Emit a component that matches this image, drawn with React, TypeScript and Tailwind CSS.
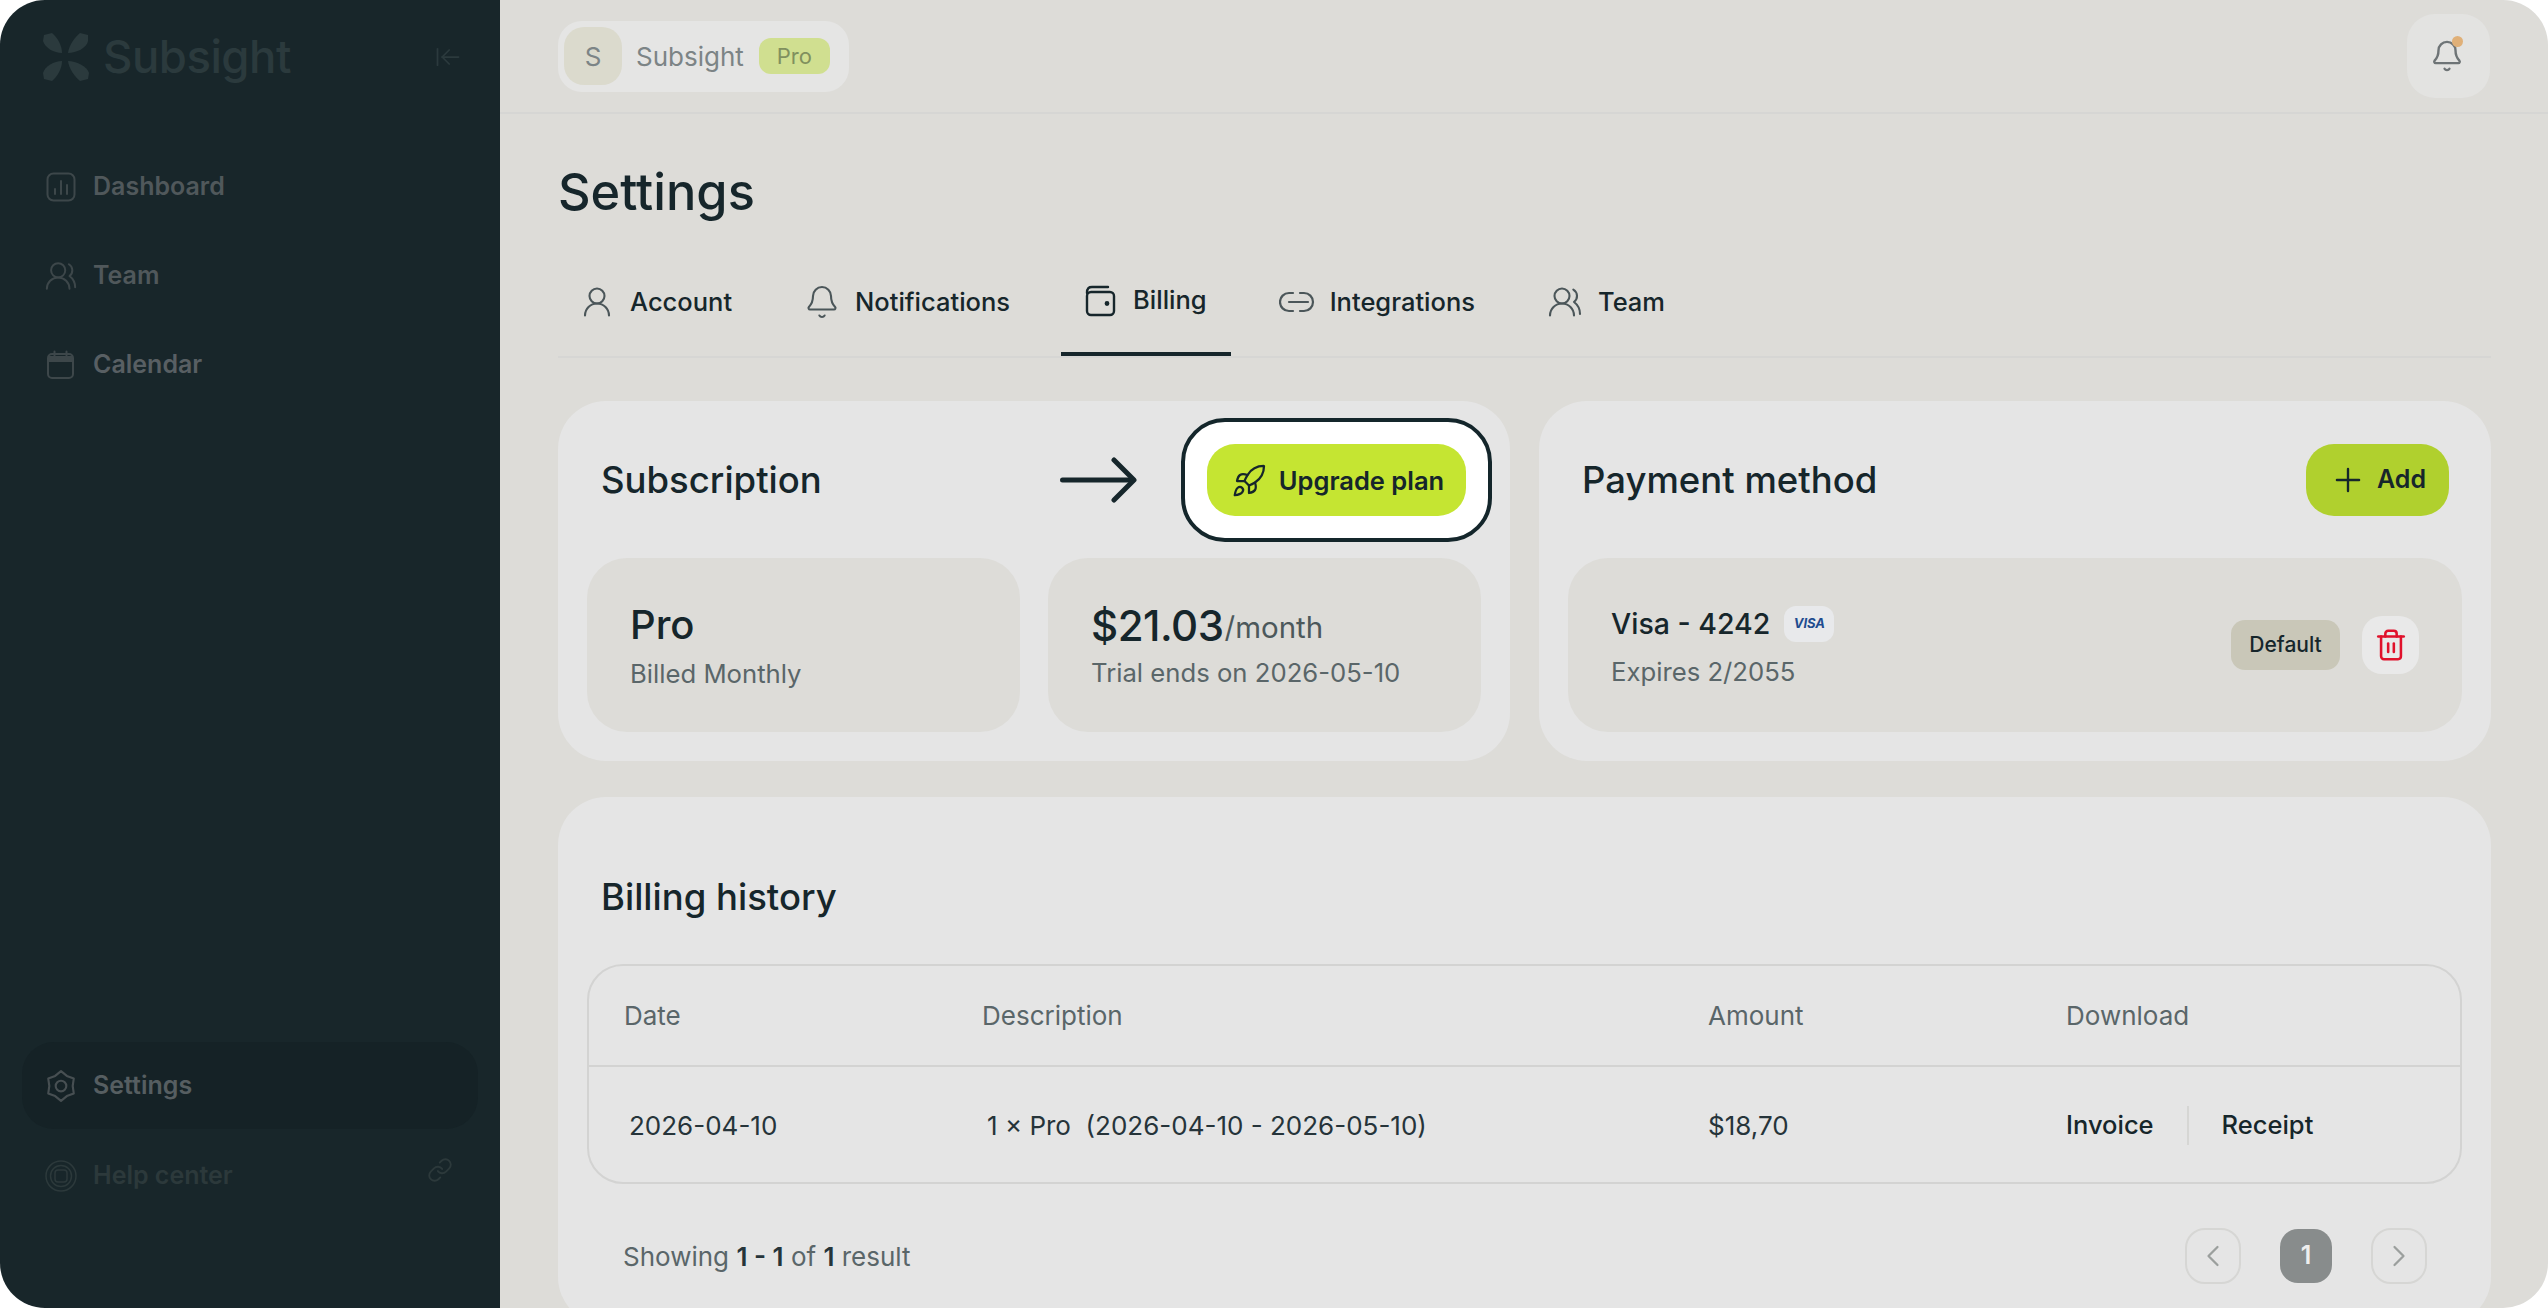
import type { ComponentType } from "react";
import {
  ArrowLeftToLine,
  Bell,
  ChevronLeft,
  ChevronRight,
  Link,
  Plus,
  Rocket,
  Trash2,
  UserRound,
  UsersRound,
} from "lucide-react";

const heading = "font-['Inter',sans-serif]";

function Logo() {
  return (
    <svg width="46" height="48" viewBox="0 0 46 48" fill="#2b3a3d">
      <path d="M1 2 L9 0 C14 4 19 12 19 20 C11 20 2 15 0 8 Z" />
      <path d="M45 2 L37 0 C32 4 26 12 25 20 C33 20 44 15 45 8 Z" />
      <path d="M1 46 L9 48 C14 44 19 36 19 28 C11 28 2 33 0 40 Z" />
      <path d="M45 46 L37 48 C32 44 26 36 25 28 C33 28 44 33 46 40 Z" />
    </svg>
  );
}

function DashboardIcon() {
  return (
    <svg width="30" height="30" viewBox="0 0 30 30" fill="none" stroke="currentColor" strokeWidth="2" strokeLinecap="round">
      <rect x="1.5" y="1.5" width="27" height="27" rx="6" />
      <path d="M9 17v5M15 9v13M21 13v9" />
    </svg>
  );
}

function CalendarIcon() {
  return (
    <svg width="30" height="30" viewBox="0 0 30 30" fill="none" stroke="currentColor" strokeWidth="2" strokeLinecap="round">
      <rect x="2" y="4" width="25" height="24" rx="4" />
      <path d="M3 6h23v6H3z" fill="currentColor" stroke="none" />
      <path d="M8.5 1.5v4M20.5 1.5v4" />
    </svg>
  );
}

function GearIcon() {
  return (
    <svg width="32" height="34" viewBox="2 0 28 32" fill="none" stroke="currentColor" strokeWidth="2" strokeLinejoin="round">
      <path d="M16 2 L21.5 6.5 L28 9 L27 16 L28 23 L21.5 25.5 L16 30 L10.5 25.5 L4 23 L5 16 L4 9 L10.5 6.5 Z" />
      <circle cx="16" cy="16" r="5" />
    </svg>
  );
}

function HelpIcon() {
  return (
    <svg width="32" height="32" viewBox="0 0 32 32" fill="none" stroke="currentColor" strokeWidth="1.5">
      <circle cx="16" cy="16" r="15" />
      <circle cx="16" cy="16" r="10.5" />
      <rect x="10" y="10" width="12" height="12" rx="3" />
    </svg>
  );
}

function WalletIcon({ className }: { className?: string }) {
  return (
    <svg className={className} width="36" height="36" viewBox="0 0 36 36" fill="none" stroke="currentColor" strokeWidth="2.4" strokeLinecap="round">
      <path d="M5 11 C5 6 7 5 10 5 H26" />
      <rect x="5" y="10" width="27" height="23" rx="4" />
      <circle cx="25" cy="21.5" r="1.2" fill="currentColor" />
    </svg>
  );
}

function LinkIcon({ className }: { className?: string }) {
  return (
    <svg className={className} width="36" height="36" viewBox="0 0 36 36" fill="none" stroke="currentColor" strokeWidth="2.2" strokeLinecap="round">
      <path d="M14 9 H10 a9 9 0 0 0 0 18 H14" />
      <path d="M21 9 H25 a9 9 0 0 1 0 18 H21" />
      <path d="M10 18 H29" />
    </svg>
  );
}

function ArrowIcon() {
  return (
    <svg width="77" height="46" viewBox="0 0 77 46" fill="none" stroke="#16262b" strokeWidth="5" strokeLinecap="round" strokeLinejoin="round">
      <path d="M2.5 23H73" />
      <path d="M54 3 L74 23 L54 43" />
    </svg>
  );
}

function Sidebar() {
  return (
    <aside className="w-[500px] shrink-0 bg-[#18262a] flex flex-col px-[22px] pb-[89px]">
      <div className="h-[143px] pt-[33px] pl-[21px] flex items-start">
        <Logo />
        <span className={`${heading} ml-[14px] text-[45.5px] leading-[48px] font-medium text-[#2b3a3d] tracking-[-0.5px]`}>Subsight</span>
        <ArrowLeftToLine className="ml-auto mr-[16px] mt-[10px] text-[#2b3a3d]" size={28} strokeWidth={1.5} />
      </div>
      <nav className="flex flex-col gap-[2px] text-[25px] font-semibold text-[#50585b]">
        <div className="h-[87px] px-[24px] flex items-center gap-[17px]">
          <span className="text-[#3d474a]"><DashboardIcon /></span>
          <span>Dashboard</span>
        </div>
        <div className="h-[87px] px-[22px] flex items-center gap-[15px]">
          <UsersRound className="text-[#3d474a]" size={34} strokeWidth={1.4} />
          <span>Team</span>
        </div>
        <div className="h-[87px] px-[24px] flex items-center gap-[17px]">
          <span className="text-[#3d474a]"><CalendarIcon /></span>
          <span className="text-[#585f63]">Calendar</span>
        </div>
      </nav>
      <div className="mt-auto flex flex-col gap-[3px] text-[25px] font-semibold">
        <div className="h-[87px] px-[23px] flex items-center gap-[16px] rounded-[32px] bg-[#152226] text-[#565e61]">
          <span className="text-[#474f52]"><GearIcon /></span>
          <span>Settings</span>
        </div>
        <div className="h-[87px] pl-[23px] pr-[25px] flex items-center gap-[16px] text-[#2c393b]">
          <HelpIcon />
          <span>Help center</span>
          <Link className="ml-auto -translate-y-[6px]" size={26} strokeWidth={1.7} />
        </div>
      </div>
    </aside>
  );
}

function Tab({
  icon: Icon,
  size = 36,
  label,
  active,
}: {
  icon: ComponentType<{ className?: string; size?: number; strokeWidth?: number }>;
  size?: number;
  label: string;
  active?: boolean;
}) {
  return (
    <div
      className={`h-full -mb-[2px] pl-[21px] pr-[24px] flex items-center gap-[15px] text-[25.5px] font-medium text-[#16262b] border-b-[4px] ${
        active ? "border-[#16262b] pb-[4px]" : "border-transparent"
      }`}
    >
      <Icon className={active ? "text-[#16262b]" : "text-[#4b5659]"} size={size} strokeWidth={1.4} />
      <span>{label}</span>
    </div>
  );
}

function Header() {
  return (
    <header className="h-[114px] shrink-0 border-b-2 border-[#d6d6d4] pl-[58px] pr-[58px] flex items-center justify-between">
      <div className="h-[71px] w-[291px] rounded-[24px] bg-[#e5e5e4] flex items-center pl-[6px]">
        <div className="w-[58px] h-[58px] rounded-[20px] bg-[#dbdacd] flex items-center justify-center text-[26px] text-[#7c8486]">S</div>
        <span className="ml-[14px] text-[26px] text-[#7c8486]">Subsight</span>
        <span className="ml-[15px] h-[36px] w-[71px] rounded-[12px] bg-[#d0df90] flex items-center justify-center text-[22px] text-[#80905e]">Pro</span>
      </div>
      <div className="relative w-[83px] h-[84px] rounded-[28px] bg-[#e3e3e1] flex items-center justify-center">
        <Bell className="text-[#6e7476] -translate-x-[2px]" size={34} strokeWidth={1.7} />
        <span className="absolute top-[22px] right-[27px] w-[11px] h-[11px] rounded-full bg-[#e0b078]" />
      </div>
    </header>
  );
}

function Subscription() {
  return (
    <section className="rounded-[48px] bg-[#e5e5e5] p-[29px]">
      <div className="pt-[14px] pl-[14px] pr-[15px] flex items-center justify-between">
        <h2 className={`${heading} text-[36.5px] font-medium text-[#16262b]`}>Subscription</h2>
        <div className="flex items-center gap-[70px]">
          <ArrowIcon />
          <div className="relative">
            <div className="absolute -inset-[26px] rounded-[44px] border-4 border-[#14262b] bg-white" />
            <button className="relative w-[259px] h-[72px] rounded-[28px] bg-[#c5e532] flex items-center justify-center gap-[12px] pt-[2px] pl-[2px] text-[25.5px] font-semibold text-[#16262b]">
              <Rocket size={36} strokeWidth={1.5} />
              <span>Upgrade plan</span>
            </button>
          </div>
        </div>
      </div>
      <div className="mt-[42px] grid grid-cols-2 gap-[28px]">
        <div className="h-[174px] rounded-[40px] bg-[#dddcd8] px-[43px] flex flex-col justify-center pt-[3px]">
          <div className={`${heading} text-[40px] leading-[48px] font-medium text-[#16262b]`}>Pro</div>
          <div className="mt-[7px] text-[25.7px] leading-[36px] text-[#5a6669]">Billed Monthly</div>
        </div>
        <div className="h-[174px] rounded-[40px] bg-[#dddcd8] px-[43px] flex flex-col justify-center pt-[4px]">
          <div className="leading-[44px] text-[#16262b]">
            <span className={`${heading} text-[42px] font-medium tracking-[-0.5px]`}>$21.03</span>
            <span className="inline-block ml-[1px] -translate-y-[3px] text-[29.5px] text-[#4c585b]">/month</span>
          </div>
          <div className="-mt-[2px] text-[25.7px] leading-[36px] text-[#5a6669]">Trial ends on 2026-05-10</div>
        </div>
      </div>
    </section>
  );
}

function PaymentMethod() {
  return (
    <section className="rounded-[48px] bg-[#e5e5e5] p-[29px]">
      <div className="pt-[14px] pl-[14px] pr-[13px] flex items-center justify-between">
        <h2 className={`${heading} text-[36.5px] font-medium text-[#16262b]`}>Payment method</h2>
        <button className="w-[143px] h-[72px] rounded-[28px] bg-[#b0d02e] flex items-center justify-center gap-[10px] text-[25px] font-semibold text-[#16262b]">
          <Plus size={38} strokeWidth={1.5} />
          <span>Add</span>
        </button>
      </div>
      <div className="mt-[42px] h-[174px] rounded-[40px] bg-[#dddcd8] pl-[43px] pr-[43px] flex items-center justify-between">
        <div className="pt-[6px]">
          <div className="flex items-center gap-[14px]">
            <span className="text-[28.5px] leading-[36px] font-medium text-[#16262b]">Visa - 4242</span>
            <span className="w-[50px] h-[36px] rounded-[12px] bg-[#e8e9eb] flex items-center justify-center text-[13px] font-bold italic text-[#1f4c8f]">VISA</span>
          </div>
          <div className="mt-[12px] text-[25.7px] leading-[36px] text-[#5a6669]">Expires 2/2055</div>
        </div>
        <div className="flex items-center gap-[22px]">
          <span className="w-[109px] h-[50px] rounded-[14px] bg-[#c9c7b8] flex items-center justify-center text-[21px] font-medium text-[#16262b]">Default</span>
          <button className="w-[57px] h-[58px] rounded-[20px] bg-[#e9e9e9] flex items-center justify-center text-[#e0112b]">
            <Trash2 size={34} strokeWidth={1.8} />
          </button>
        </div>
      </div>
    </section>
  );
}

function BillingHistory() {
  return (
    <section className="mt-[36px] rounded-[48px] bg-[#e5e5e5] px-[29px] pt-[77px] pb-[41px]">
      <h2 className={`${heading} pl-[14px] text-[36.5px] leading-[46px] font-medium text-[#16262b]`}>Billing history</h2>
      <div className="mt-[44px] rounded-[36px] border-2 border-[#d3d3d2]">
        <div className="h-[101px] pl-[35px] grid grid-cols-[358px_726px_358px_1fr] items-center border-b-2 border-[#d3d3d2] text-[26px] text-[#5a6669]">
          <span>Date</span>
          <span>Description</span>
          <span>Amount</span>
          <span>Download</span>
        </div>
        <div className="h-[115px] pl-[35px] pt-[2px] grid grid-cols-[358px_726px_358px_1fr] items-center text-[26px] text-[#26343a]">
          <span className="pl-[5px]">2026-04-10</span>
          <span className="pl-[5px] whitespace-pre">1 × Pro  (2026-04-10 - 2026-05-10)</span>
          <span>$18,70</span>
          <div className="flex items-center font-medium text-[25.5px] text-[#16262b]">
            <span>Invoice</span>
            <span className="mx-[33px] w-[2px] h-[39px] bg-[#d6d6d4]" />
            <span>Receipt</span>
          </div>
        </div>
      </div>
      <div className="mt-[44px] pl-[36px] pr-[35px] flex items-center justify-between">
        <p className="text-[26px] text-[#5a6669]">
          Showing <b className="font-semibold text-[#26343a]">1 - 1</b> of <b className="font-semibold text-[#26343a]">1</b> result
        </p>
        <div className="flex items-center gap-[39px]">
          <button className="w-[56px] h-[56px] rounded-[20px] border-2 border-[#d6d6d4] flex items-center justify-center text-[#9b9f9d]">
            <ChevronLeft size={36} strokeWidth={1.5} />
          </button>
          <span className="w-[52px] h-[54px] rounded-[18px] bg-[#888c8c] flex items-center justify-center text-[25px] font-semibold text-[#eeeeee]">1</span>
          <button className="w-[56px] h-[56px] rounded-[20px] border-2 border-[#d6d6d4] flex items-center justify-center text-[#9b9f9d]">
            <ChevronRight size={36} strokeWidth={1.5} />
          </button>
        </div>
      </div>
    </section>
  );
}

export default function App() {
  return (
    <div className="h-[1308px] w-full bg-white font-['Inter',sans-serif]">
      <div className="h-full flex rounded-[45px] overflow-hidden">
        <Sidebar />
        <main className="flex-1 min-w-0 bg-[#dddcd8] flex flex-col overflow-hidden">
          <Header />
          <div className="pl-[58px] pr-[57px]">
            <h1 className={`${heading} mt-[48px] text-[50.5px] leading-[60px] font-medium text-[#16262b]`}>Settings</h1>
            <div className="mt-[24px] h-[112px] pt-[6px] flex gap-[27px] border-b-2 border-[#d6d6d4]">
              <Tab icon={UserRound} label="Account" />
              <Tab icon={Bell} label="Notifications" />
              <Tab icon={WalletIcon} label="Billing" active />
              <Tab icon={LinkIcon} label="Integrations" />
              <Tab icon={UsersRound} label="Team" />
            </div>
            <div className="mt-[43px] grid grid-cols-2 gap-[29px]">
              <Subscription />
              <PaymentMethod />
            </div>
            <BillingHistory />
          </div>
        </main>
      </div>
    </div>
  );
}
